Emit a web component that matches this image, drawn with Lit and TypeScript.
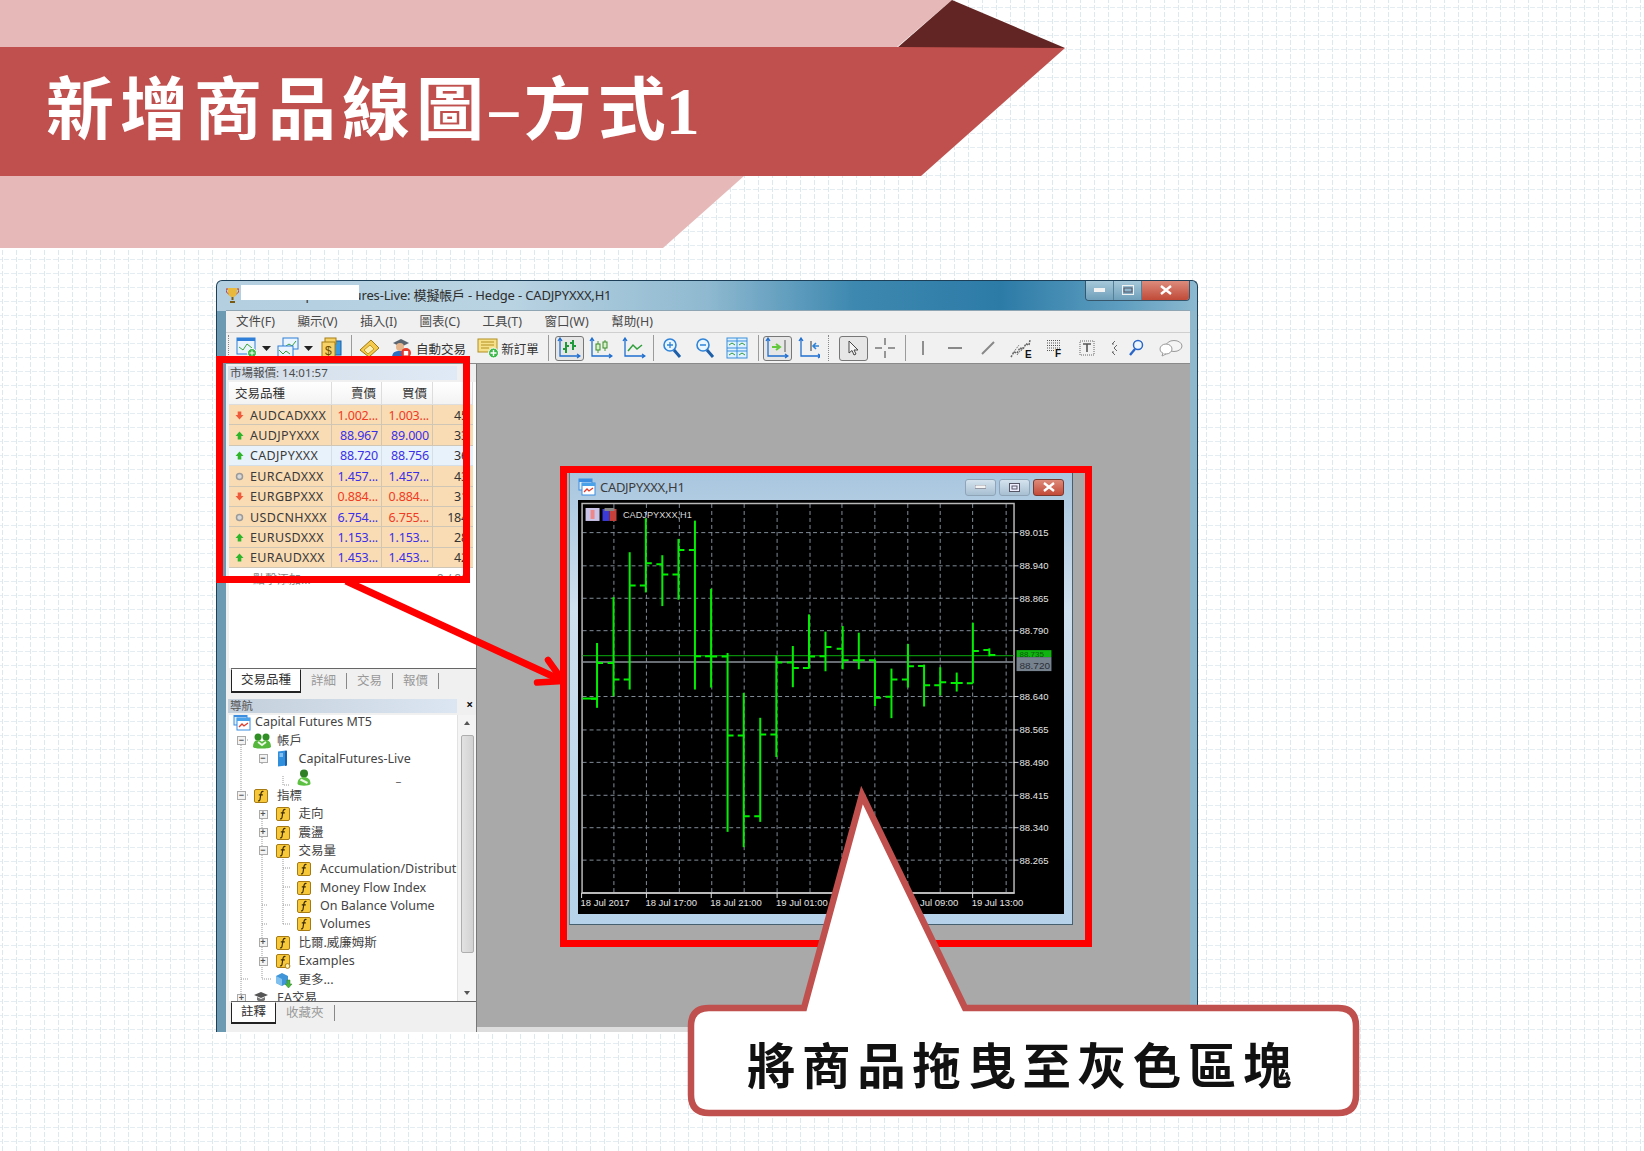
import { LitElement, html, css, svg } from "lit";
import { customElement } from "lit/decorators.js";

const win = (w = 18) => html`<svg class="i" width=${w} height=${w} viewBox="0 0 18 18"><rect x="1" y="1" width="13" height="11" fill="#dfeefb" stroke="#3b8ee0"/><rect x="1" y="1" width="13" height="3" fill="#3b8ee0"/><rect x="4" y="5" width="13" height="12" fill="#fff" stroke="#3b8ee0"/><rect x="4" y="5" width="13" height="3" fill="#4aa3e8"/><path d="M6 14l3-3 2 2 4-3" stroke="#e03c2c" stroke-width="1.3" fill="none"/></svg>`;
const fIcon = (extra = false) => html`<svg class="i" width="16" height="16" viewBox="0 0 16 16"><rect x="1.5" y="1.5" width="13" height="13" rx="1.500" fill="#f7c93a" stroke="#a87a12"/><path d="M10.500 3.500c-2-.5-2.400 1-2.700 3L7 11.500c-.2 1.300-1 1.500-2 1.200M5.800 6.800h4" stroke="#3a2a04" stroke-width="1.200" fill="none"/>${extra ? svg`<circle cx="12.500" cy="13" r="2.400" fill="#fff3b8" stroke="#a87a12"/>` : ""}</svg>`;
const users = html`<svg class="i" width="18" height="17" viewBox="0 0 18 17"><circle cx="5" cy="5" r="3.500" fill="#2f8f25"/><circle cx="13" cy="5" r="3.500" fill="#2f8f25"/><path d="M0 15c0-5 2.500-7 5-7 2 0 3.300 1 4 2 .7-1 2-2 4-2 2.500 0 5 2 5 7-1 2-17 2-18 0z" fill="#55b83d"/><path d="M5 10l4 3 4-3" stroke="#eef9e6" stroke-width="1.800" fill="none"/></svg>`;
const user = html`<svg class="i" width="16" height="17" viewBox="0 0 16 17"><circle cx="8" cy="4.500" r="4" fill="#2f7f25"/><path d="M1.500 15c0-5 3-7 6.500-7s6.500 2 6.500 7c-1 2.300-12 2.300-13 0z" fill="#5cc142"/><path d="M4.500 10.500l7 3.500" stroke="#eef9e6" stroke-width="2.200"/></svg>`;
const server = html`<svg class="i" width="16" height="17" viewBox="0 0 16 17"><path d="M3 1.500l8-1v15l-8 1z" fill="#2f8fdc"/><path d="M10 1v15l2-.5V.5z" fill="#1b5fa8"/><path d="M4.500 4h3.500M4.500 6h3.500" stroke="#d8efff"/></svg>`;
const cap = html`<svg class="i" width="16" height="16" viewBox="0 0 16 16"><path d="M1 5l7-3 7 3-7 3z" fill="#555"/><path d="M4 7v3c2 2 6 2 8 0V7l-4 2z" fill="#777"/></svg>`;
const cube = html`<svg class="i" width="18" height="18" viewBox="0 0 18 18"><path d="M1 5l6-3 6 3v7l-6 3-6-3z" fill="#3f95d8"/><path d="M7 8v7l-6-3V5z" fill="#7fc0ee"/><path d="M12 9h3v4h2l-3.500 4-3.500-4h2z" fill="#49b53a" stroke="#2f7d25" stroke-width=".5"/></svg>`;

const up = html`<svg class="ar" width="11" height="11" viewBox="0 0 11 11"><path d="M5.500 1.500L9.500 6H7.300v3.500H3.700V6H1.500z" fill="#2fb52a"/></svg>`;
const down = html`<svg class="ar" width="11" height="11" viewBox="0 0 11 11"><path d="M5.500 9.500L1.500 5h2.200V1.500h3.600V5h2.200z" fill="#ef5a3a"/></svg>`;
const flat = html`<svg class="ar" width="11" height="11" viewBox="0 0 11 11"><circle cx="5.500" cy="5.500" r="3" fill="#d8d8d8" stroke="#9a9a9a" stroke-width="1.500"/></svg>`;

type Sym = [any, string, string, string, string, "r" | "b", "r" | "b", boolean];
const SYMS: Sym[] = [
  [down, "AUDCADXXX", "1.002...", "1.003...", "45", "r", "r", false],
  [up, "AUDJPYXXX", "88.967", "89.000", "33", "b", "b", false],
  [up, "CADJPYXXX", "88.720", "88.756", "36", "b", "b", true],
  [flat, "EURCADXXX", "1.457...", "1.457...", "43", "b", "b", false],
  [down, "EURGBPXXX", "0.884...", "0.884...", "31", "r", "r", false],
  [flat, "USDCNHXXX", "6.754...", "6.755...", "184", "b", "r", false],
  [up, "EURUSDXXX", "1.153...", "1.153...", "28", "b", "b", false],
  [up, "EURAUDXXX", "1.453...", "1.453...", "42", "b", "b", false],
];

type Node = [number, "-" | "+" | "", any, string];
const TREE: Node[] = [
  [0, "-", users, "帳戶"],
  [1, "-", server, "CapitalFutures-Live"],
  [2, "", user, ""],
  [0, "-", fIcon(), "指標"],
  [1, "+", fIcon(), "走向"],
  [1, "+", fIcon(), "震盪"],
  [1, "-", fIcon(), "交易量"],
  [2, "", fIcon(), "Accumulation/Distribution"],
  [2, "", fIcon(), "Money Flow Index"],
  [2, "", fIcon(), "On Balance Volume"],
  [2, "", fIcon(), "Volumes"],
  [1, "+", fIcon(), "比爾.威廉姆斯"],
  [1, "+", fIcon(true), "Examples"],
  [1, "", cube, "更多..."],
  [0, "+", cap, "EA交易"],
];

const B = "#1f6fd0";
const axes = svg`<path d="M3 2v17h19M1 4l2-3 2 3M20 17l3 2-3 2" stroke="${B}" stroke-width="1.300" fill="none"/>`;
const T: [number, number, any][] = [
  [228, 1, html`<div class="sep grip"></div>`],
  [247, 22, html`<svg width="22" height="22" viewBox="0 0 22 22"><rect x="1" y="1" width="18" height="16" fill="#e9f4fe" stroke="#2f7fd8"/><rect x="1" y="1" width="18" height="3" fill="#2f7fd8"/><path d="M3 10l4 3 4-6 5 4" stroke="#3aa53a" fill="none"/><circle cx="16" cy="16" r="4.500" fill="#3cb94a" stroke="#fff"/><path d="M16 13.500v5M13.500 16h5" stroke="#fff"/></svg>`],
  [266, 9, html`<svg width="9" height="5"><path d="M0 0h9L4.500 5z" fill="#222"/></svg>`],
  [288, 22, html`<svg width="22" height="22" viewBox="0 0 22 22"><rect x="6" y="1" width="15" height="11" fill="#eaf5ff" stroke="#2f7fd8"/><path d="M9 9l3-2 3 2 4-5" stroke="#35a035" fill="none"/><rect x="1" y="9" width="15" height="12" fill="#eaf5ff" stroke="#2f7fd8"/><path d="M2 13l4 4 3-3 4 3" stroke="#35a035" fill="none"/></svg>`],
  [308, 9, html`<svg width="9" height="5"><path d="M0 0h9L4.500 5z" fill="#222"/></svg>`],
  [331, 22, html`<svg width="22" height="22" viewBox="0 0 22 22"><rect x="9" y="4" width="12" height="14" fill="#3a9ae0" stroke="#1c5fa5"/><rect x="5" y="1" width="11" height="6" fill="#f6d268" stroke="#a67d12"/><rect x="2" y="5" width="13" height="16" fill="#f6d268" stroke="#a67d12"/><text x="5" y="18" font-size="12" font-family="Liberation Sans" fill="#6b4b00">$</text></svg>`],
  [351, 1, html`<div class="sep"></div>`],
  [369, 22, html`<svg width="22" height="22" viewBox="0 0 22 22"><path d="M2 13L13 3l8 8-10 9z" fill="#f5c94b" stroke="#9c7710"/><path d="M6 13l6-5 4 4-6 5z" fill="#fdeeb0" stroke="#c19a28"/></svg>`],
  [401, 22, html`<svg width="22" height="22" viewBox="0 0 22 22"><path d="M3 6l8-4 8 4-8 4z" fill="#5a6470"/><circle cx="10" cy="10" r="4" fill="#e6b48a"/><path d="M2 21c0-6 3-7 8-7s7 2 7 7z" fill="#2f6fc0"/><circle cx="16" cy="16" r="5" fill="#e63a2a"/><rect x="13.800" y="14" width="4.400" height="4.400" fill="#fff"/></svg>`],
  [441, 50, html`<span class="tt">自動交易</span>`],
  [488, 23, html`<svg width="23" height="23" viewBox="0 0 23 23"><rect x="1" y="2" width="19" height="13" fill="#f7e08a" stroke="#b28f20"/><path d="M4 5h13M4 8h13M4 11h8" stroke="#b28f20"/><circle cx="16.500" cy="16" r="5" fill="#3cb94a" stroke="#fff"/><path d="M16.500 13v6M13.500 16h6" stroke="#fff" stroke-width="1.400"/></svg>`],
  [520, 38, html`<span class="tt">新訂單</span>`],
  [548, 1, html`<div class="sep"></div>`],
  [569, 29, html`<div class="on"><svg width="24" height="22" viewBox="0 0 24 22">${axes}<path d="M9 5v11M6 12h3M9 9h3M16 3v10M13 6h3M16 9h3" stroke="#1f9a3a" stroke-width="2" fill="none"/></svg></div>`],
  [601, 24, html`<svg width="24" height="22" viewBox="0 0 24 22">${axes}<path d="M9 4v12M16 3v11" stroke="#4a9a3a"/><rect x="7" y="7" width="4" height="6" fill="#d6f3c8" stroke="#3a8a2a"/><rect x="14" y="5" width="4" height="6" fill="#d6f3c8" stroke="#3a8a2a"/></svg>`],
  [634, 24, html`<svg width="24" height="22" viewBox="0 0 24 22">${axes}<path d="M6 14l5-6 4 4 5-4" stroke="#2f9f3a" stroke-width="1.500" fill="none"/></svg>`],
  [653, 1, html`<div class="sep"></div>`],
  [672, 20, html`<svg width="20" height="22" viewBox="0 0 20 22"><circle cx="8" cy="8" r="6" fill="#e9f5ff" stroke="#2f84d8" stroke-width="1.600"/><path d="M12 13l6 7" stroke="#1d5fa8" stroke-width="3"/><path d="M5 8h6M8 5v6" stroke="#2f84d8" stroke-width="1.300"/></svg>`],
  [705, 20, html`<svg width="20" height="22" viewBox="0 0 20 22"><circle cx="8" cy="8" r="6" fill="#e9f5ff" stroke="#2f84d8" stroke-width="1.600"/><path d="M12 13l6 7" stroke="#1d5fa8" stroke-width="3"/><path d="M5 8h6" stroke="#2f84d8" stroke-width="1.300"/></svg>`],
  [737, 22, html`<svg width="22" height="22" viewBox="0 0 22 22"><rect x="1" y="1" width="20" height="20" fill="#dff0ff" stroke="#3a8fdc"/><path d="M11 1v20M1 11h20M1 4h20M1 14h20" stroke="#3a8fdc"/><path d="M3 8l3-2 3 2M13 8l3-2 3 2M3 18l3-2 3 2M13 18l3-2 3 2" stroke="#2f9a3a" fill="none"/></svg>`],
  [758, 1, html`<div class="sep"></div>`],
  [777, 29, html`<div class="on"><svg width="24" height="22" viewBox="0 0 24 22">${axes}<path d="M20 3v12" stroke="#555"/><path d="M7 10h7M11 7l4 3-4 3" stroke="#62c83c" stroke-width="2" fill="none"/></svg></div>`],
  [809, 22, html`<svg width="22" height="22" viewBox="0 0 22 22">${axes}<path d="M13 4v10" stroke="#333"/><path d="M21 9h-5M18 6l-3 3 3 3" stroke="#2f84d8" stroke-width="1.600" fill="none"/></svg>`],
  [828, 1, html`<div class="sep grip"></div>`],
  [853, 29, html`<div class="on"><svg width="14" height="17" viewBox="0 0 14 17"><path d="M3 1v12l3-2.500 2 4.500 2-1-2-4h4z" fill="#f4f4f4" stroke="#444"/></svg></div>`],
  [885, 22, html`<svg width="22" height="22" viewBox="0 0 22 22"><path d="M1 11h7M14 11h7M11 1v7M11 14v7" stroke="#777" stroke-width="1.500"/></svg>`],
  [905, 1, html`<div class="sep"></div>`],
  [923, 6, html`<svg width="6" height="16"><path d="M3 1v14" stroke="#777" stroke-width="1.600"/></svg>`],
  [955, 16, html`<svg width="16" height="6"><path d="M1 3h14" stroke="#666" stroke-width="1.600"/></svg>`],
  [988, 16, html`<svg width="16" height="16"><path d="M2 14L14 2" stroke="#888" stroke-width="2"/></svg>`],
  [1021, 22, html`<svg width="22" height="22" viewBox="0 0 22 22"><path d="M1 20l3-5 3 1 3-5 3 1 3-5 3 1 1-5" stroke="#666" stroke-width="1.500" fill="none" stroke-dasharray="2 1"/><path d="M3 16l6-8M7 18l6-8M11 14l6-8" stroke="#777" stroke-dasharray="2 1"/><text x="15" y="21" font-size="10" font-weight="700" font-family="Liberation Sans" fill="#111">E</text></svg>`],
  [1054, 18, html`<svg width="18" height="20" viewBox="0 0 18 20"><path d="M2 2.500h13M2 5h13M2 7.500h13M2 10h13" stroke="#555" stroke-dasharray="1 1"/><path d="M2 12.500h7" stroke="#555" stroke-dasharray="1 1"/><text x="10" y="19" font-size="10" font-weight="700" font-family="Liberation Sans" fill="#111">F</text></svg>`],
  [1087, 18, html`<svg width="18" height="18" viewBox="0 0 18 18"><rect x="2" y="2" width="14" height="14" fill="none" stroke="#666" stroke-dasharray="1 1"/><path d="M5 5h8M9 5v8" stroke="#555" stroke-width="1.600"/></svg>`],
  [1115, 8, html`<svg width="8" height="16" viewBox="0 0 8 16"><path d="M4 1L1 4h2M4 15L1 12h2M6 5L3 8l3 3" stroke="#666" fill="none"/></svg>`],
  [1136, 16, html`<svg width="16" height="18" viewBox="0 0 16 18"><circle cx="10" cy="6" r="4.500" fill="#eef6ff" stroke="#2a66c8" stroke-width="1.500"/><path d="M7 10l-5 6" stroke="#2a66c8" stroke-width="2.400"/></svg>`],
  [1171, 24, html`<svg width="24" height="18" viewBox="0 0 24 18"><ellipse cx="15" cy="7" rx="8" ry="5.500" fill="#f4f4f4" stroke="#999"/><ellipse cx="7" cy="10" rx="6" ry="5" fill="#fff" stroke="#999"/><path d="M4 14l-1 3 4-2" fill="#fff" stroke="#999"/></svg>`],
];

const MENU = ["文件(F)", "顯示(V)", "插入(I)", "圖表(C)", "工具(T)", "窗口(W)", "幫助(H)"];

const bx = (z: number) => 560 + z / 2.904;
const by = (z: number) => 465 + z / 3;
const BARS: number[][] = [
  [106, 535, 730, 703, 595], [154, 397, 695, 595, 645], [201, 262, 675, 645, 362], [248, 160, 383, 362, 295],
  [296, 271, 424, 298, 329], [343, 222, 405, 329, 255], [391, 167, 675, 255, 575], [438, 372, 669, 575, 576],
  [486, 565, 1103, 576, 813], [533, 685, 1149, 813, 1056], [581, 760, 1073, 1056, 810], [628, 573, 878, 810, 594],
  [676, 544, 668, 594, 610], [723, 449, 612, 610, 576], [771, 501, 620, 575, 547], [821, 484, 614, 552, 587],
  [868, 504, 614, 587, 587], [915, 585, 725, 587, 700], [963, 612, 761, 697, 645], [1011, 538, 669, 645, 605],
  [1058, 600, 726, 604, 662], [1105, 608, 693, 662, 653], [1153, 624, 681, 655, 655], [1200, 474, 656, 656, 559],
  [1248, 551, 575, 556, 571],
].map((b) => [bx(b[0]), by(b[1]), by(b[2]), by(b[3]), by(b[4])]);
const PRICES: [number, string][] = [
  [532.7, "89.015"], [566, "88.940"], [598.5, "88.865"], [631, "88.790"], [697, "88.640"],
  [730.5, "88.565"], [763, "88.490"], [796, "88.415"], [828.5, "88.340"], [861, "88.265"],
];
const VX = [613.4, 646, 679, 711.5, 744, 777, 810, 842, 875, 908, 940.5, 973, 1006.6];
const TIMES: [number, string][] = [
  [581, "18 Jul 2017"], [646, "18 Jul 17:00"], [711, "18 Jul 21:00"], [777, "19 Jul 01:00"],
  [842, "19 Jul 05:00"], [908, "19 Jul 09:00"], [973, "19 Jul 13:00"],
];

@customElement("app-root")
export class AppRoot extends LitElement {
  static styles = css`
    :host { display: block; position: relative; width: 1644px; height: 1151px; overflow: hidden; background: #fff; font-family: "Noto Sans", "Noto Sans CJK TC", sans-serif; color: #333; }
    .paper { position: absolute; inset: 0; }
    .banner { position: relative; height: 248px; }
    .banner svg { position: absolute; inset: 0; }
    h1 { position: relative; margin: 0; padding: 61px 0 0 46px; font: 700 68px/88px "Noto Sans CJK TC", sans-serif; letter-spacing: 6px; color: #fff; white-space: nowrap; }
    .hy { display: inline-block; transform: scaleX(1.7); margin: 0 8px; letter-spacing: 0; font-weight: 400; }
    .tight { letter-spacing: 0; }
    .one { font-family: "Liberation Serif", serif; letter-spacing: 0; }

    .window { position: relative; box-sizing: border-box; margin: 32px 0 0 216px; width: 982px; height: 752px; display: flex; flex-direction: column; overflow: hidden; border-radius: 6px 6px 0 0; border: 1px solid #1d3f58; border-bottom: 0; padding: 0 7px 0 9px; background: linear-gradient(90deg, #b3cfe0, #b9d3e2 30%, #8fb9d0 50%, #3d88b0 65%, #2c7ba7 80%, #5d9dbf 92%, #8cb9d0) top / 100% 30px no-repeat, linear-gradient(90deg, #6c9ab2 0 9px, #8fb8cc 9px); }
    .title { flex: none; height: 29px; display: flex; align-items: center; padding: 0 0 2px; box-sizing: border-box; font-size: 13px; letter-spacing: -.17px; color: #2d2d2d; position: relative; white-space: nowrap; }
    .trophy { margin-right: 6px; }
    .mask { position: absolute; left: 15px; top: 4px; width: 118px; height: 15px; background: #fff; }
    .caps { position: absolute; right: 0; top: -1px; height: 20px; display: flex; border: 1px solid #36566c; border-top: 0; border-radius: 0 0 4px 4px; overflow: hidden; }
    .cap { width: 27px; display: flex; align-items: center; justify-content: center; background: linear-gradient(#a9cbdc, #6f9fba); border-right: 1px solid #567f98; }
    .cap.close { width: 47px; background: linear-gradient(#dd8f80, #c04a38); border: 0; }
    .menu { flex: none; height: 23px; display: flex; align-items: center; gap: 22.6px; padding: 0 0 3px 10px; background: #f0f0f0; border-top: 1px solid #8fa5b3; box-sizing: border-box; font-size: 12.5px; color: #4a4a4a; border-bottom: 1px solid #cfcfcf; white-space: nowrap; }
    .toolbar { flex: none; height: 31px; display: flex; align-items: center; background: #f1f1f1; border-bottom: 1px solid #8a8a8a; box-sizing: border-box; }
    .tb { flex: none; display: flex; align-items: center; justify-content: center; }
    .sep { width: 1px; height: 26px; background: #9b9b9b; }
    .grip { border-left: 1px dotted #888; background: none; }
    .on { width: 29px; height: 25px; box-sizing: border-box; border: 1px solid #777; border-radius: 3px; background: #e6e6e6; display: flex; align-items: center; justify-content: center; flex: none; }
    .tt { font-size: 12.5px; color: #333; white-space: nowrap; }

    .body { flex: 1; display: flex; min-height: 0; }
    .side { flex: none; width: 251px; box-sizing: border-box; display: flex; flex-direction: column; background: #f0f0f0; border-right: 1px solid #777; }
    .phead { flex: none; height: 14px; margin: 2px 19px 0 2px; background: linear-gradient(90deg, #d4dde8, #dfeaf6); font-size: 11.5px; line-height: 14px; color: #4c4c4c; padding-left: 2px; white-space: nowrap; }
    .market { flex: none; height: 286px; margin: 2px 0 0 3px; background: #fff; display: flex; flex-direction: column; overflow: hidden; }
    .grid { display: grid; grid-template-columns: 103px 50px 51px 40px; font-size: 12.5px; }
    .hd { height: 23px; padding-bottom: 2px; display: flex; align-items: center; background: linear-gradient(#fff, #f3f3f3); border-right: 1px solid #ddd; border-bottom: 1px solid #ddd; box-sizing: border-box; justify-content: flex-end; padding-right: 5px; color: #333; font-size: 12.5px; }
    .hd.first { justify-content: flex-start; padding-left: 6px; }
    .c { height: 20.4px; padding-top: 1px; display: flex; align-items: center; box-sizing: border-box; border-right: 1px solid #cfc6b6; border-bottom: 1px solid #cfc6b6; background: #f9dcb4; justify-content: flex-end; padding-right: 3px; white-space: nowrap; overflow: hidden; letter-spacing: -.2px; }
    .c.sel { background: #e8f2fb; border-color: #d5dfe8; }
    .c.sym { justify-content: flex-start; padding-left: 5px; color: #3a3a3a; letter-spacing: .35px; }
    .ar { margin-right: 5px; flex: none; }
    .c.r { color: #f03a24; }
    .c.b { color: #3a30e8; }
    .c.last { padding-right: 5px; color: #333; border-right: 0; }
    .add { display: flex; justify-content: space-between; padding: 2px 8px 0 24px; font-size: 12px; color: #888; }
    .tabs { flex: none; height: 24px; display: flex; align-items: center; margin-left: 5px; border-top: 1px solid #666; font-size: 12.5px; color: #999; position: relative; }
    .tab.active { height: 24px; margin-top: -1px; padding: 0 9px; background: #fff; border: 1px solid #222; border-top: 1px solid #fff; border-bottom-width: 2px; box-sizing: border-box; color: #333; display: flex; align-items: center; }
    .tab { padding: 0 10px; border-right: 1px solid #888; line-height: 16px; }
    .tabs.nav { height: 22px; }
    .tabs.nav .tab.active { height: 22px; }
    .phead2 { flex: none; height: 14px; margin: 6px 19px 0 2px; background: linear-gradient(90deg, #c4cfdc, #dbe6f2); font-size: 11.5px; line-height: 14px; color: #555; padding-left: 2px; position: relative; }
    .phead2 b { position: absolute; right: -16px; top: -1px; font-size: 12px; color: #111; }
    .tree-wrap { flex: none; height: 286px; margin: 2px 0 0 3px; display: flex; background: #fff; overflow: hidden; }
    .tree { position: relative; width: 228px; overflow: hidden; margin-top: -2px; }
    .lines { position: absolute; left: 0; top: 0; }
    .row { position: relative; height: 18.4px; display: flex; align-items: center; font-size: 12.5px; line-height: 16px; color: #444; white-space: nowrap; }
    .row.root { padding-left: 4px; }
    .row.root span { margin-left: 4px; }
    .exp { flex: none; width: 16px; }
    .exp i { display: block; width: 9px; height: 9px; box-sizing: border-box; border: 1px solid #aaa; background: #f3f3f3; font: 700 9px/7px "Liberation Sans", sans-serif; text-align: center; color: #555; }
    .i { flex: none; }
    .ico { flex: none; width: 24px; display: flex; }
    .dash { margin-left: 76px; font-size: 11px; }
    .sb { flex: 1; background: #f4f4f4; border-left: 1px solid #e2e2e2; position: relative; display: flex; flex-direction: column; align-items: center; padding-top: 6px; box-sizing: border-box; }
    .thumb { margin-top: 10px; width: 13px; height: 218px; box-sizing: border-box; border: 1px solid #aeaeae; background: linear-gradient(90deg, #e2e2e2, #d2d2d2); border-radius: 2px; }
    .sb i { width: 0; height: 0; border: 3px solid transparent; }
    .sb .u { border-bottom: 4px solid #555; border-top: 0; }
    .sb .d { border-top: 4px solid #555; border-bottom: 0; margin-top: auto; margin-bottom: 6px; }

    .mdi { flex: 1; background: #a9a9a9; border-bottom: 5px solid #ddd; box-sizing: border-box; padding: 108px 0 0 92px; }
    .cw { box-sizing: border-box; width: 504px; height: 453px; display: flex; flex-direction: column; padding: 0 8px 10px; background: linear-gradient(#a8c6df, #cfe0ee 30%, #b5d2ea); border: 1px solid #47606f; border-top: 0; border-left-color: #6b7f8b; }
    .ct { flex: none; height: 28px; padding-top: 2px; box-sizing: border-box; display: flex; align-items: center; gap: 4px; font-size: 13px; color: #3c3c3c; letter-spacing: -.3px; white-space: nowrap; }
    .btns { margin-left: auto; display: flex; gap: 3px; }
    .btn { width: 31px; height: 17px; box-sizing: border-box; border: 1px solid #8fa5b7; border-radius: 3px; background: linear-gradient(#d5e3ee, #a7bfd2); display: flex; align-items: center; justify-content: center; }
    .btn.x { background: linear-gradient(#dd8a7a, #c34a38); border-color: #7b3a30; }
    .chart { display: block; background: #000; }
    .chart text { font-family: "Liberation Sans", sans-serif; }

    .frame { position: absolute; box-sizing: border-box; border: 7px solid #fe0000; }
    .f1 { left: 216px; top: 356px; width: 254px; height: 227px; }
    .f2 { left: 560px; top: 466px; width: 532px; height: 481px; }
    .arrow { position: absolute; left: 340px; top: 575px; }
    .callout { position: absolute; left: 685px; top: 780px; width: 680px; height: 340px; }
    .callout svg { position: absolute; inset: 0; }
    .callout p { position: absolute; left: 62px; top: 248px; margin: 0; font: 700 48.5px/70px "Noto Sans CJK TC", sans-serif; letter-spacing: 6.6px; color: #111; white-space: nowrap; }
  `;

  toolbar() {
    let right = 226;
    return T.map(([cx, w, c]) => {
      const left = cx - w / 2;
      const ml = left - right;
      right = left + w;
      return html`<div class="tb" style="width:${w}px;margin-left:${ml}px">${c}</div>`;
    });
  }

  chart() {
    const o = 578, t = 500;
    return html`<svg class="chart" width="486" height="415" viewBox="${o} ${t} 486 415">
      <g stroke="#828d98" stroke-width="1" stroke-dasharray="4 3">
        ${PRICES.map(([y]) => svg`<line x1="582" x2="1014" y1=${y} y2=${y}/>`)}
        ${VX.map((x) => svg`<line x1=${x} x2=${x} y1="504" y2="893"/>`)}
      </g>
      <path d="M581.500 894V503.500H1014.500V894Z" fill="none" stroke="#b8b8b8" stroke-width="1.500"/>
      <path d="M581 894H1015" stroke="#c8c8c8" stroke-width="1.500"/>
      ${TIMES.map(([x]) => svg`<line x1=${x} x2=${x} y1="894" y2="899" stroke="#ddd"/>`)}
      ${PRICES.map(([y]) => svg`<line x1="1014" x2="1019" y1=${y} y2=${y} stroke="#ddd"/>`)}
      <rect x="585" y="508" width="14" height="13" fill="#c9c4e8"/><rect x="590" y="510" width="4" height="9" fill="#e88"/>
      <rect x="602" y="509" width="7" height="12" fill="#3b3bd8"/><rect x="609" y="509" width="7" height="12" fill="#c8403a"/><rect x="604" y="508" width="10" height="3" fill="#888"/>
      <text x="622.500" y="518" font-size="10" fill="#d8d8d8" textLength="69" lengthAdjust="spacingAndGlyphs">CADJPYXXX,H1</text>
      <line x1="582" x2="1014" y1="656" y2="656" stroke="#0a8a0a" stroke-width="1.500"/>
      <line x1="582" x2="1014" y1="662.500" y2="662.500" stroke="#8a929a" stroke-width="1.500"/>
      ${BARS.map(([x, hi, lo, op, cl]) => svg`
        <path d="M${x} ${hi}V${lo}" stroke="#00f000" stroke-width="2"/>
        <path d="M${x - 6} ${op}H${x}M${x} ${cl}H${x + 6}" stroke="#00f000" stroke-width="2"/>`)}
      <path d="M582 699H597" stroke="#00f000" stroke-width="2"/>
      <rect x="1017" y="650.500" width="35" height="7" fill="#0fb40f"/>
      <rect x="1017" y="657.500" width="35" height="14" fill="#76828e"/>
      <text x="1020" y="657" font-size="8" fill="#0a5a0a">88.735</text>
      <text x="1020" y="669" font-size="10" fill="#2a2f36">88.720</text>
      ${PRICES.map(([y, s]) => svg`<text x="1020" y=${y + 3.5} font-size="9.500" fill="#e4e4e4">${s}</text>`)}
      ${TIMES.map(([x, s]) => svg`<text x=${x - 1} y="907" font-size="9.500" fill="#e4e4e4">${s}</text>`)}
    </svg>`;
  }

  render() {
    return html`
      <svg class="paper" width="1644" height="1151">
        <defs>
          <pattern id="grid" width="14" height="14" patternUnits="userSpaceOnUse">
            <path d="M2.500 0v3M2.500 5v5M2.500 12v2" stroke="#dceaef" fill="none"/>
            <path d="M0 7.500h2M4 7.500h5M11 7.500h3" stroke="#e4edf1" fill="none"/>
          </pattern>
        </defs>
        <rect width="1644" height="1151" fill="url(#grid)"/>
      </svg>

      <header class="banner">
        <svg width="1100" height="248">
          <path d="M0 0H952L897 47H0Z" fill="#e6b9b8"/>
          <path d="M952 0L1065 48H897Z" fill="#632523"/>
          <path d="M0 47H897L1065 48L921 176H0Z" fill="#c0504d"/>
          <path d="M0 176H744L663 248H0Z" fill="#e6b9b8"/>
        </svg>
        <h1>新增商品線<span class="tight">圖</span><span class="hy">-</span>方<span class="tight">式</span><span class="one">1</span></h1>
      </header>

      <section class="window">
        <div class="title">
          <svg class="trophy" width="13" height="16" viewBox="0 0 13 16"><path d="M2 1h9v4c0 3-2 5-4.500 5S2 8 2 5z" fill="#e8b93a"/><path d="M2 2H0c0 3 1 4 2.500 5M11 2h2c0 3-1 4-2.500 5" stroke="#c0392b" fill="none"/><path d="M6.500 10v3M4 15h5" stroke="#7a5a10" stroke-width="2"/></svg>
          <span>6.0.42 · Capital Futures-Live: 模擬帳戶 - Hedge - CADJPYXXX,H1</span>
          <div class="mask"></div>
          <div class="caps">
            <div class="cap"><svg width="11" height="5"><rect width="11" height="4" fill="#f2f2f2"/></svg></div>
            <div class="cap"><svg width="12" height="10"><rect x=".5" y=".5" width="11" height="9" fill="none" stroke="#f2f2f2"/><rect x="2" y="3" width="8" height="4" fill="none" stroke="#556"/></svg></div>
            <div class="cap close"><svg width="12" height="10"><path d="M1 1l10 8M11 1L1 9" stroke="#fff" stroke-width="2.400"/></svg></div>
          </div>
        </div>
        <nav class="menu">${MENU.map((m) => html`<span>${m}</span>`)}</nav>
        <div class="toolbar">${this.toolbar()}</div>
        <div class="body">
          <aside class="side">
            <div class="phead">市場報價: 14:01:57</div>
            <div class="market">
              <div class="grid">
                <div class="hd first">交易品種</div><div class="hd">賣價</div><div class="hd">買價</div><div class="hd"></div>
                ${SYMS.map(([ic, s, a, b, sp, ca, cb, sel]) => {
                  const k = sel ? "sel" : "";
                  return html`
                    <div class="c sym ${k}">${ic}${s}</div>
                    <div class="c ${ca} ${k}">${a}</div>
                    <div class="c ${cb} ${k}">${b}</div>
                    <div class="c last ${k}">${sp}</div>`;
                })}
              </div>
              <div class="add"><span>點擊添加...</span><span>8 / 80</span></div>
            </div>
            <div class="tabs"><div class="tab active">交易品種</div><div class="tab">詳細</div><div class="tab">交易</div><div class="tab">報價</div></div>
            <div class="phead2">導航<b>×</b></div>
            <div class="tree-wrap">
              <div class="tree">
                <svg class="lines" width="228" height="288">
                  <path d="M12 26V288M12 27H19M12 82H19M12 266H19M33 46V52M33 45H39M54 63V72H61M33 100V266M33 100H39M33 118H39M33 137H39M33 192H39M33 211H39M33 247H39M33 266H43M54 144V211M54 155H61M54 174H61M54 192H61M54 211H61" stroke="#999" stroke-dasharray="1 1" fill="none"/>
                </svg>
                <div class="row root">${win()}<span>Capital Futures MT5</span></div>
                ${TREE.map(([lvl, e, ic, label]) => html`
                  <div class="row" style="padding-left:${8 + 21.5 * lvl}px">
                    <div class="exp">${e ? html`<i>${e === "-" ? "−" : "+"}</i>` : ""}</div>
                    <div class="ico">${ic}</div>
                    ${label ? html`<span>${label}</span>` : html`<span class="dash">_</span>`}
                  </div>`)}
              </div>
              <div class="sb"><i class="u"></i><div class="thumb"></div><i class="d"></i></div>
            </div>
            <div class="tabs nav"><div class="tab active">註釋</div><div class="tab">收藏夾</div></div>
          </aside>
          <main class="mdi">
            <div class="cw">
              <div class="ct">
                ${win()}<span>CADJPYXXX,H1</span>
                <div class="btns">
                  <div class="btn"><svg width="11" height="4"><rect width="11" height="3.500" fill="#f4f4f4" stroke="#667" stroke-width=".6"/></svg></div>
                  <div class="btn"><svg width="11" height="9"><rect x=".5" y=".5" width="10" height="8" fill="#eef" stroke="#556"/><rect x="3" y="3" width="5" height="3" fill="none" stroke="#556"/></svg></div>
                  <div class="btn x"><svg width="12" height="10"><path d="M1 1l10 8M11 1L1 9" stroke="#fff" stroke-width="2.400"/></svg></div>
                </div>
              </div>
              ${this.chart()}
            </div>
          </main>
        </div>
      </section>

      <div class="frame f1"></div>
      <div class="frame f2"></div>
      <svg class="arrow" width="230" height="120" viewBox="340 575 230 120">
        <path d="M346 581L563 681" stroke="#fe0000" stroke-width="7"/>
        <path d="M548 660L563 681L537 682.500" stroke="#fe0000" stroke-width="6.500" stroke-linecap="round" stroke-linejoin="round" fill="none"/>
      </svg>
      <div class="callout">
        <svg width="680" height="340" viewBox="685 780 680 340">
          <path d="M804 1008L862 795L965 1008H1338Q1356 1008 1356 1026V1095Q1356 1113 1338 1113H709Q691 1113 691 1095V1026Q691 1008 709 1008Z" fill="#fff" stroke="#c0504d" stroke-width="6.500"/>
        </svg>
        <p>將商品拖曳至灰色區塊</p>
      </div>
    `;
  }
}
